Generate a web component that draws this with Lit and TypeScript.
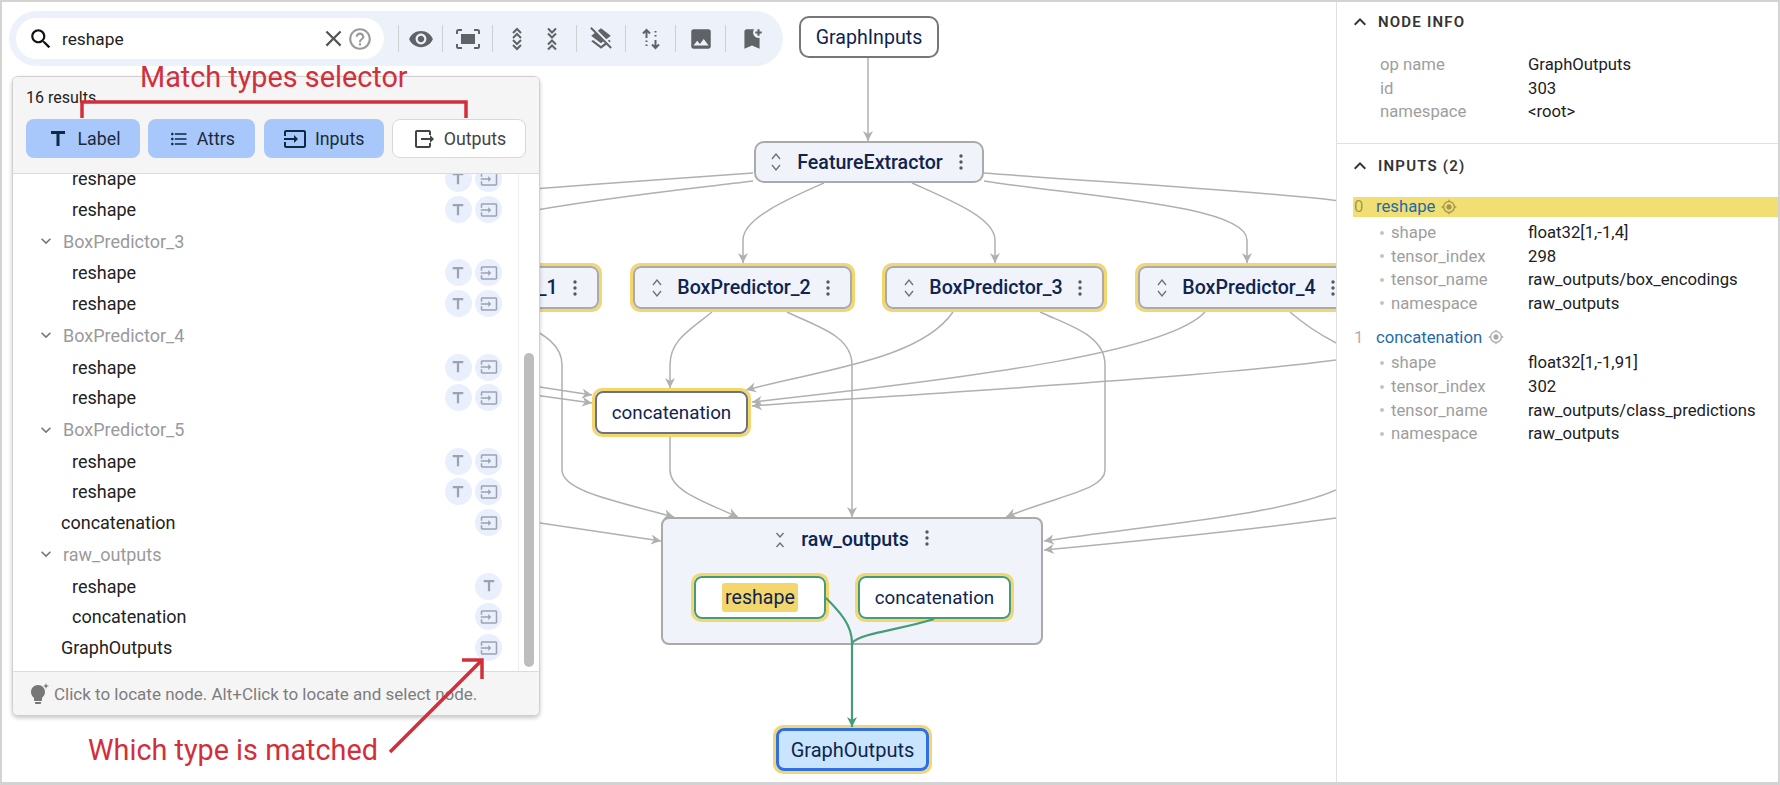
import { LitElement, html, svg, css } from "lit";
import { customElement } from "lit/decorators.js";

const P = {
  search: "M15.5 14h-.79l-.28-.27C15.41 12.59 16 11.11 16 9.5 16 5.91 13.09 3 9.5 3S3 5.91 3 9.5 5.91 16 9.5 16c1.61 0 3.09-.59 4.23-1.57l.27.28v.79l5 4.99L20.49 19l-4.99-5zm-6 0C7.01 14 5 11.99 5 9.5S7.01 5 9.5 5 14 7.01 14 9.5 11.99 14 9.5 14z",
  close: "M19 6.41L17.59 5 12 10.59 6.41 5 5 6.41 10.59 12 5 17.59 6.41 19 12 13.41 17.59 19 19 17.59 13.41 12z",
  help: "M11 18h2v-2h-2v2zm1-16C6.48 2 2 6.48 2 12s4.48 10 10 10 10-4.48 10-10S17.52 2 12 2zm0 18c-4.41 0-8-3.59-8-8s3.59-8 8-8 8 3.59 8 8-3.59 8-8 8zm0-14c-2.21 0-4 1.79-4 4h2c0-1.1.9-2 2-2s2 .9 2 2c0 2-3 1.75-3 5h2c0-2.25 3-2.5 3-5 0-2.21-1.79-4-4-4z",
  eye: "M12 4.5C7 4.5 2.73 7.61 1 12c1.73 4.39 6 7.5 11 7.5s9.27-3.11 11-7.5c-1.73-4.39-6-7.5-11-7.5zM12 17c-2.76 0-5-2.24-5-5s2.24-5 5-5 5 2.24 5 5-2.24 5-5 5zm0-8c-1.66 0-3 1.34-3 3s1.34 3 3 3 3-1.34 3-3-1.34-3-3-3z",
  layers: "M19.81 14.99l1.19-.92-1.43-1.43-1.19.92 1.43 1.43zm-.45-4.72L21 9l-9-7-2.91 2.27 7.87 7.88 2.4-1.88zM3.27 1L2 2.27l4.22 4.22L3 9l1.63 1.27L12 16l2.1-1.63 1.43 1.43L12 18.54l-7.37-5.73L3 14.07l9 7 4.95-3.85L20.73 21 22 19.73 3.27 1z",
  image: "M21 19V5c0-1.1-.9-2-2-2H5c-1.1 0-2 .9-2 2v14c0 1.1.9 2 2 2h14c1.1 0 2-.9 2-2zM8.5 13.5l2.5 3.01L14.5 12l4.5 6H5l3.5-4.5z",
  bookmark: "M21 7h-2v2h-2V7h-2V5h2V3h2v2h2v2zm-2 14l-7-3-7 3V5c0-1.1.9-2 2-2h7c-.63.84-1 1.87-1 3 0 2.76 2.24 5 5 5 .34 0 .68-.03 1-.1V21z",
  title: "M5 4v3h5.5v12h3V7H19V4z",
  list: "M4 10.5c-.83 0-1.5.67-1.5 1.5s.67 1.5 1.5 1.5 1.5-.67 1.5-1.5-.67-1.5-1.5-1.5zm0-6c-.83 0-1.5.67-1.5 1.5S3.17 7.5 4 7.5 5.5 6.83 5.5 6 4.83 4.5 4 4.5zm0 12c-.83 0-1.5.68-1.5 1.5s.68 1.5 1.5 1.5 1.5-.68 1.5-1.5-.67-1.5-1.5-1.5zM7 19h14v-2H7v2zm0-6h14v-2H7v2zm0-8v2h14V5H7z",
  input: "M21 3.01H3c-1.1 0-2 .9-2 2V9h2V4.99h18v14.03H3V15H1v4.01c0 1.1.9 1.98 2 1.98h18c1.1 0 2-.88 2-1.98v-14c0-1.11-.9-2-2-2zM11 16l4-4-4-4v3H1v2h10v3z",
  output: "M5 3h12c1.1 0 2 .9 2 2v3h-2V5H5v14h12v-3h2v3c0 1.1-.9 2-2 2H5c-1.1 0-2-.9-2-2V5c0-1.1.9-2 2-2zm13 5l4 4-4 4v-3H9v-2h9V8z",
  bulb: "M9 21c0 .5.4 1 1 1h4c.6 0 1-.5 1-1v-1H9v1zm3-18C8.1 3 5 6.1 5 10c0 2.4 1.2 4.5 3 5.7V18c0 .5.4 1 1 1h6c.6 0 1-.5 1-1v-2.3c1.8-1.3 3-3.4 3-5.700 0-3.9-3.1-7-7-7zM20 1l.8 2.2L23 4l-2.2.8L20 7l-.8-2.2L17 4l2.2-.8z",
  less: "M12 8l-6 6 1.41 1.41L12 10.83l4.59 4.58L18 14z",
  more: "M16.59 8.59L12 13.17 7.41 8.59 6 10l6 6 6-6z",
  target: "M12 8c-2.21 0-4 1.79-4 4s1.79 4 4 4 4-1.79 4-4-1.79-4-4-4zm8.94 3c-.46-4.17-3.77-7.48-7.94-7.94V1h-2v2.06C6.83 3.52 3.52 6.83 3.06 11H1v2h2.06c.46 4.17 3.77 7.48 7.94 7.94V23h2v-2.06c4.17-.46 7.48-3.77 7.94-7.94H23v-2h-2.06zM12 19c-3.87 0-7-3.13-7-7s3.13-7 7-7 7 3.13 7 7-3.13 7-7 7z",
};

const icon = (d: string, cls: string) => html`<svg class="ic ${cls}" viewBox="0 0 24 24"><path d=${d}></path></svg>`;

const focusIcon = html`<svg class="ic i24" viewBox="0 0 24 24"><path d="M1 7V4.5A1.5 1.5 0 0 1 2.5 3H6M18 3h3.5A1.5 1.5 0 0 1 23 4.5V7M23 17v2.5a1.5 1.5 0 0 1-1.5 1.5H18M6 21H2.500A1.500 1.500 0 0 1 1 19.500V17" class="st2"></path><rect x="5" y="7" width="14" height="10"></rect></svg>`;
const unfoldMore2 = html`<svg class="ic i24" viewBox="0 0 24 24"><path class="st2" d="M8 6l4-4 4 4M8 11l4-4 4 4M8 13l4 4 4-4M8 18l4 4 4-4"></path></svg>`;
const unfoldLess2 = html`<svg class="ic i24" viewBox="0 0 24 24"><path class="st2" d="M8 1.500l4 4 4-4M8 6.500l4 4 4-4M8 17.500l4-4 4 4M8 22.500l4-4 4 4"></path></svg>`;
const arrowsIcon = html`<svg class="ic i24" viewBox="0 0 24 24"><path class="st2" d="M7.500 11V3M4 6.500L7.500 3 11 6.500M7.500 13.500V15M7.500 17.500V19M16.500 4V5.500M16.500 8V9.500M16.500 13V21M13 17.500L16.500 21 20 17.500"></path></svg>`;
const chevMore = html`<svg class="nic" viewBox="0 0 12 22"><path d="M2 8l4-5 4 5M2 14l4 5 4-5"></path></svg>`;
const chevLess = html`<svg class="nic" viewBox="0 0 12 22"><path d="M2.500 4L6 8l3.500-4M2.500 18L6 14l3.500 4"></path></svg>`;
const dots = html`<svg class="dots" viewBox="0 0 6 18"><circle cx="3" cy="3" r="1.700"></circle><circle cx="3" cy="9" r="1.700"></circle><circle cx="3" cy="15" r="1.700"></circle></svg>`;

const GRAY_EDGES = [
  "M868 58 L868 141",
  "M753 173 C650 180 600 184 520 190",
  "M753 181 C680 190 600 198 520 213",
  "M824 183 C790 198 743 218 743 240 L743 263",
  "M912 183 C950 200 995 218 995 240 L995 263",
  "M984 173 C1100 182 1250 190 1350 202",
  "M984 181 C1080 196 1247 205 1247 240 L1247 263",
  "M712 312 C690 330 670 340 670 365 L670 388",
  "M787 312 C815 326 852 335 852 365 L852 517",
  "M953 312 C920 360 820 370 746 390",
  "M1040 312 C1070 326 1105 335 1105 365 L1105 470 C1105 490 1060 495 1006 517",
  "M1205 312 C1170 350 1000 375 752 402",
  "M1336 360 C1200 378 900 395 752 406",
  "M1336 490 C1280 515 1150 525 1044 541",
  "M1336 518 C1250 530 1150 540 1044 550",
  "M520 322 C545 335 562 345 562 365 L562 470 C562 490 610 500 674 517",
  "M520 384 L592 395",
  "M520 393 L592 403",
  "M520 520 L661 541",
  "M670 437 L670 470 C670 490 700 500 738 517",
];

type NodeData = { x: number; y: number; w: number; h: number; label: string; cls: string; group?: boolean; hit?: boolean };
const NODES: NodeData[] = [
  { x: 799, y: 16, w: 140, h: 42, label: "GraphInputs", cls: "op" },
  { x: 754, y: 141, w: 230, h: 42, label: "FeatureExtractor", cls: "grp fe", group: true },
  { x: 377, y: 263, w: 225, h: 49, label: "BoxPredictor_1", cls: "grp hl", group: true },
  { x: 630, y: 263, w: 225, h: 49, label: "BoxPredictor_2", cls: "grp hl", group: true },
  { x: 882, y: 263, w: 225, h: 49, label: "BoxPredictor_3", cls: "grp hl", group: true },
  { x: 1135, y: 263, w: 225, h: 49, label: "BoxPredictor_4", cls: "grp hl", group: true },
  { x: 592, y: 388, w: 159, h: 49, label: "concatenation", cls: "op dark hl tight" },
  { x: 691, y: 573, w: 138, h: 49, label: "reshape", cls: "op green hl", hit: true },
  { x: 855, y: 573, w: 159, h: 49, label: "concatenation", cls: "op green hl tight" },
  { x: 773, y: 725, w: 159, h: 49, label: "GraphOutputs", cls: "op sel hl" },
];

type Row = { label: string; kind: "leaf" | "top" | "group"; t?: boolean; i?: boolean };
const R: Row = { label: "reshape", kind: "leaf", t: true, i: true };
const ROWS: Row[] = [
  R, R,
  { label: "BoxPredictor_3", kind: "group" }, R, R,
  { label: "BoxPredictor_4", kind: "group" }, R, R,
  { label: "BoxPredictor_5", kind: "group" }, R, R,
  { label: "concatenation", kind: "top", i: true },
  { label: "raw_outputs", kind: "group" },
  { label: "reshape", kind: "leaf", t: true },
  { label: "concatenation", kind: "leaf", i: true },
  { label: "GraphOutputs", kind: "top", i: true },
];

const TOOLS = [
  { w: 44, ic: [icon(P.eye, "i26")] },
  { w: 50, ic: [focusIcon] },
  { w: 84, ic: [unfoldMore2, unfoldLess2] },
  { w: 49, ic: [icon(P.layers, "i26")] },
  { w: 50, ic: [arrowsIcon] },
  { w: 50, ic: [icon(P.image, "i26")] },
  { w: 52, ic: [icon(P.bookmark, "i26")] },
];

const INFO = [["op name", "GraphOutputs"], ["id", "303"], ["namespace", "<root>"]];
const INPUTS = [
  { name: "reshape", hit: true, rows: [["shape", "float32[1,-1,4]"], ["tensor_index", "298"], ["tensor_name", "raw_outputs/box_encodings"], ["namespace", "raw_outputs"]] },
  { name: "concatenation", hit: false, rows: [["shape", "float32[1,-1,91]"], ["tensor_index", "302"], ["tensor_name", "raw_outputs/class_predictions"], ["namespace", "raw_outputs"]] },
];

@customElement("app-root")
export class AppRoot extends LitElement {
  static styles = css`
    :host { display: block; font-family: Roboto, "Liberation Sans", sans-serif; }
    * { box-sizing: border-box; }
    .page { display: flex; width: 1780px; height: 785px; border: solid #d3d3d3; border-width: 2px 2px 3px 2px; background: #fff; overflow: hidden; }
    .canvas { position: relative; width: 1334px; height: 780px; overflow: hidden; flex: none; }
    .layer { position: absolute; left: -2px; top: -2px; width: 1780px; height: 785px; pointer-events: none; }
    .edge { fill: none; stroke: #b0b0b0; stroke-width: 1.500; }
    .edge.g { stroke: #459c76; stroke-width: 2.200; }
    .ic { display: block; fill: currentColor; flex: none; }
    .st2 { fill: none; stroke: currentColor; stroke-width: 2; }
    .i24 { width: 24px; height: 24px; } .i26 { width: 26px; height: 26px; }
    .i20 { width: 20px; height: 20px; } .i16 { width: 16px; height: 16px; } .i18 { width: 18px; height: 18px; }

    .node { position: absolute; isolation: isolate; display: flex; align-items: center; justify-content: center; border-radius: 10px; font-size: 19.600px; color: #0f2450; background: #fff; }
    .tight { font-size: 18.800px; }
    .sel { font-size: 20px; }
    .op { border: 2px solid #777; }
    .grp { background: #f0f3f9; border: 2px solid #aaa; font-weight: 500; justify-content: space-between; }
    .fe { padding: 0 18px 0 14px; }
    .hl { box-shadow: 0 0 0 3px #f3d66d inset; }
    .node.hl { border: 0; padding: 3px; }
    .node.grp.hl { padding: 3px 24px 3px 21px; }
    .frame { position: absolute; inset: 3px; border: 2px solid #aaa; border-radius: 8px; background: #f0f3f9; z-index: 0; }
    .op .frame { background: #fff; }
    .dark .frame { border-color: #6c7280; }
    .green .frame { border-color: #459c76; border-width: 2.500px; }
    .sel .frame { border-color: #2f6fe0; border-width: 3px; background: #c9e5fd; }
    .nlabel { position: relative; z-index: 1; }
    .hit { background: #f3d66d; border-radius: 3px; padding: 3px; }
    .nic { position: relative; z-index: 1; width: 12px; height: 22px; fill: none; stroke: #6d6f75; stroke-width: 1.300; flex: none; }
    .dots { position: relative; z-index: 1; width: 6px; height: 18px; fill: #55585e; flex: none; }
    .raw { position: absolute; left: 659px; top: 515px; width: 382px; height: 128px; background: #f0f3f9; border: 2px solid #aaa; border-radius: 8px; display: flex; justify-content: center; align-items: flex-start; gap: 15px; padding-top: 10px; font-size: 19.600px; font-weight: 500; color: #0f2450; }
    .raw span { line-height: 22px; }

    .toolbar { position: absolute; z-index: 2; left: 7px; top: 9px; width: 774px; height: 55px; border-radius: 28px; background: #edf2fa; padding: 7px; display: flex; align-items: center; color: #5f6368; }
    .search { width: 368px; height: 41px; border-radius: 21px; background: #fff; display: flex; align-items: center; padding: 0 11px 0 12px; font-size: 17.300px; color: #222; margin-right: 14px; flex: none; }
    .search .q { flex: 1; margin-left: 8px; }
    .search .s { color: #111; width: 26px; height: 26px; }
    .search .x { color: #555; width: 27px; height: 27px; }
    .search .h { color: #9a9a9a; width: 26px; height: 26px; margin-left: 0; }
    .tool { display: flex; align-items: center; justify-content: space-evenly; height: 27px; border-left: 1px solid #cfd0d2; flex: none; }

    .pop { position: absolute; z-index: 2; left: 10px; top: 74px; width: 528px; height: 640px; background: #fff; border: 1px solid #d0d0d0; border-radius: 6px; box-shadow: 0 2px 4px rgba(0,0,0,.22); display: flex; flex-direction: column; overflow: hidden; }
    .phead { background: #f5f5f5; border-bottom: 1px solid #dcdcdc; height: 97px; padding: 10px 13px 0 13px; flex: none; }
    .res { font-size: 16px; color: #222; line-height: 22px; }
    .btns { display: flex; justify-content: space-between; margin-top: 10px; }
    .btn { height: 39px; border-radius: 8px; background: #a8c7fa; display: flex; align-items: center; justify-content: center; gap: 8px; font-size: 17.800px; color: #1b2a3a; }
    .btn .ic { color: #0d2a45; }
    .btn.off { background: #fff; border: 1.500px solid #d8d8d8; color: #444; }
    .btn.off .ic { color: #444; }
    .b1 { width: 114px; } .b2 { width: 107px; } .b3 { width: 120px; } .b4 { width: 134px; }
    .pbody { flex: 1; display: flex; overflow: hidden; }
    .rows { flex: 1; padding-top: 0; overflow: hidden; }
    .rowsin { margin-top: -10.500px; }
    .row { display: flex; align-items: center; height: 30.800px; font-size: 18px; color: #222; padding-right: 16px; }
    .row .l { flex: 1; }
    .leaf .l { padding-left: 59px; }
    .top .l { padding-left: 48px; }
    .group { height: 32.500px; color: #9a9a9a; }
    .group .l { padding-left: 7px; }
    .group .ic { margin-left: 23px; color: #777; }
    .bd { width: 27px; height: 27px; border-radius: 50%; background: #e9effd; display: flex; align-items: center; justify-content: center; color: #9ca3ae; margin-left: 3.500px; flex: none; }
    .gut { width: 21px; border-left: 1px solid #eee; padding: 179px 0 0 5px; flex: none; }
    .thumb { width: 10px; height: 314px; border-radius: 5px; background: #bdbdbd; }
    .pfoot { height: 44px; background: #f5f5f5; border-top: 1px solid #dcdcdc; display: flex; align-items: center; padding-left: 13px; gap: 4px; font-size: 17px; color: #7d7d7d; flex: none; }
    .pfoot .ic { color: #777; }

    .ann { position: absolute; z-index: 3; color: #d22f3b; font-size: 28.800px; white-space: nowrap; line-height: 34px; }
    .a1 { left: 138px; top: 58px; }
    .a2 { left: 86px; top: 731px; }
    .over { z-index: 3; }
    .red { fill: none; stroke: #d22f3b; stroke-width: 3.500px; }

    .panel { flex: 1; border-left: 1px solid #e0e0e0; font-size: 16.700px; }
    .sec { border-bottom: 1px solid #e0e0e0; }
    .sec:last-child { border-bottom: 0; }
    .sh { display: flex; align-items: center; gap: 6px; padding-left: 11px; font-weight: 600; font-size: 15px; letter-spacing: 1.200px; color: #333; height: 40px; }
    .sec + .sec .sh { height: 44px; }
    .kv { display: flex; height: 23.600px; align-items: center; white-space: nowrap; }
    .kv .k { width: 148px; color: #9e9e9e; flex: none; }
    .kv .v { color: #202124; }
    .info { padding: 11px 0 19px 43px; }
    .inp { padding: 9px 0 30px 16px; }
    .ih { display: flex; align-items: center; height: 20px; }
    .ih.on { background: #f2df74; }
    .ih .n { width: 23px; padding-left: 1px; color: rgba(0,0,0,.35); flex: none; }
    .ih .t { color: #1f6aa8; font-weight: 400; }
    .ih .ic { color: rgba(0,0,0,.33); margin-left: 6px; }
    .props { padding: 4px 0 12px 27px; }
    .props .kv .k { width: 148px; display: flex; align-items: center; gap: 7px; }
    .dot { width: 4px; height: 4px; border-radius: 50%; background: #c4c4c4; }
  `;

  private renderNode(n: NodeData) {
    const pos = `left:${n.x - 2}px;top:${n.y - 2}px;width:${n.w}px;height:${n.h}px`;
    const hl = n.cls.includes("hl");
    return html`<div class="node ${n.cls}" style=${pos}>
      ${hl ? html`<div class="frame"></div>` : ""}
      ${n.group ? chevMore : ""}
      <span class="nlabel ${n.hit ? "hit" : ""}">${n.label}</span>
      ${n.group ? dots : ""}
    </div>`;
  }

  private renderRow(r: Row) {
    return html`<div class="row ${r.kind}">
      ${r.kind === "group" ? icon(P.more, "i20") : ""}
      <span class="l">${r.label}</span>
      ${r.t ? html`<span class="bd">${icon(P.title, "i18")}</span>` : ""}
      ${r.i ? html`<span class="bd">${icon(P.input, "i18")}</span>` : ""}
    </div>`;
  }

  render() {
    return html`<div class="page">
      <div class="canvas">
        <svg class="layer" viewBox="0 0 1780 785">
          <defs>
            <marker id="ag" markerUnits="userSpaceOnUse" markerWidth="12" markerHeight="12" refX="11" refY="6" orient="auto"><path d="M1 1L11 6L1 11L4 6z" fill="#b0b0b0"></path></marker>
          </defs>
          ${GRAY_EDGES.map((d) => svg`<path class="edge" d=${d} marker-end="url(#ag)"></path>`)}
          <path class="edge" d="M1290 312 C1305 325 1320 335 1340 345"></path>
        </svg>
        ${NODES.slice(0, 7).map((n) => this.renderNode(n))}
        <div class="raw">${chevLess}<span>raw_outputs</span>${dots}</div>
        ${NODES.slice(7).map((n) => this.renderNode(n))}
        <svg class="layer" viewBox="0 0 1780 785">
          <defs>
            <marker id="agg2" markerUnits="userSpaceOnUse" markerWidth="12" markerHeight="12" refX="11" refY="6" orient="auto"><path d="M1 1L11 6L1 11L4 6z" fill="#459c76"></path></marker>
          </defs>
          <path class="edge g" d="M826 598 C840 612 852 625 852 643 L852 727" marker-end="url(#agg2)"></path>
          <path class="edge g" d="M934 619 C900 630 860 633 852 643"></path>
        </svg>

        <div class="pop">
          <div class="phead">
            <div class="res">16 results</div>
            <div class="btns">
              <div class="btn b1">${icon(P.title, "i24")}Label</div>
              <div class="btn b2">${icon(P.list, "i20")}Attrs</div>
              <div class="btn b3">${icon(P.input, "i24")}Inputs</div>
              <div class="btn b4 off">${icon(P.output, "i24")}Outputs</div>
            </div>
          </div>
          <div class="pbody">
            <div class="rows"><div class="rowsin">${ROWS.map((r) => this.renderRow(r))}</div></div>
            <div class="gut"><div class="thumb"></div></div>
          </div>
          <div class="pfoot">${icon(P.bulb, "i24")}<span>Click to locate node. Alt+Click to locate and select node.</span></div>
        </div>

        <div class="toolbar">
          <div class="search">
            ${icon(P.search, "s")}<span class="q">reshape</span>${icon(P.close, "x")}${icon(P.help, "h")}
          </div>
          ${TOOLS.map((t) => html`<div class="tool" style="width:${t.w}px">${t.ic}</div>`)}
        </div>

        <div class="ann a1">Match types selector</div>
        <div class="ann a2">Which type is matched</div>
        <svg class="layer over" viewBox="0 0 1780 785">
          <path class="red" d="M82 118V102H466V118"></path>
          <path class="red" d="M390 752L481 661M462 660H482V679"></path>
        </svg>
      </div>

      <div class="panel">
        <div class="sec">
          <div class="sh">${icon(P.less, "i24")}<span>NODE INFO</span></div>
          <div class="info">
            ${INFO.map(([k, v]) => html`<div class="kv"><span class="k">${k}</span><span class="v">${v}</span></div>`)}
          </div>
        </div>
        <div class="sec">
          <div class="sh">${icon(P.less, "i24")}<span>INPUTS (2)</span></div>
          <div class="inp">
            ${INPUTS.map((it, i) => html`
              <div class="ih ${it.hit ? "on" : ""}"><span class="n">${i}</span><span class="t">${it.name}</span>${icon(P.target, "i16")}</div>
              <div class="props">
                ${it.rows.map(([k, v]) => html`<div class="kv"><span class="k"><span class="dot"></span>${k}</span><span class="v">${v}</span></div>`)}
              </div>`)}
          </div>
        </div>
      </div>
    </div>`;
  }
}
